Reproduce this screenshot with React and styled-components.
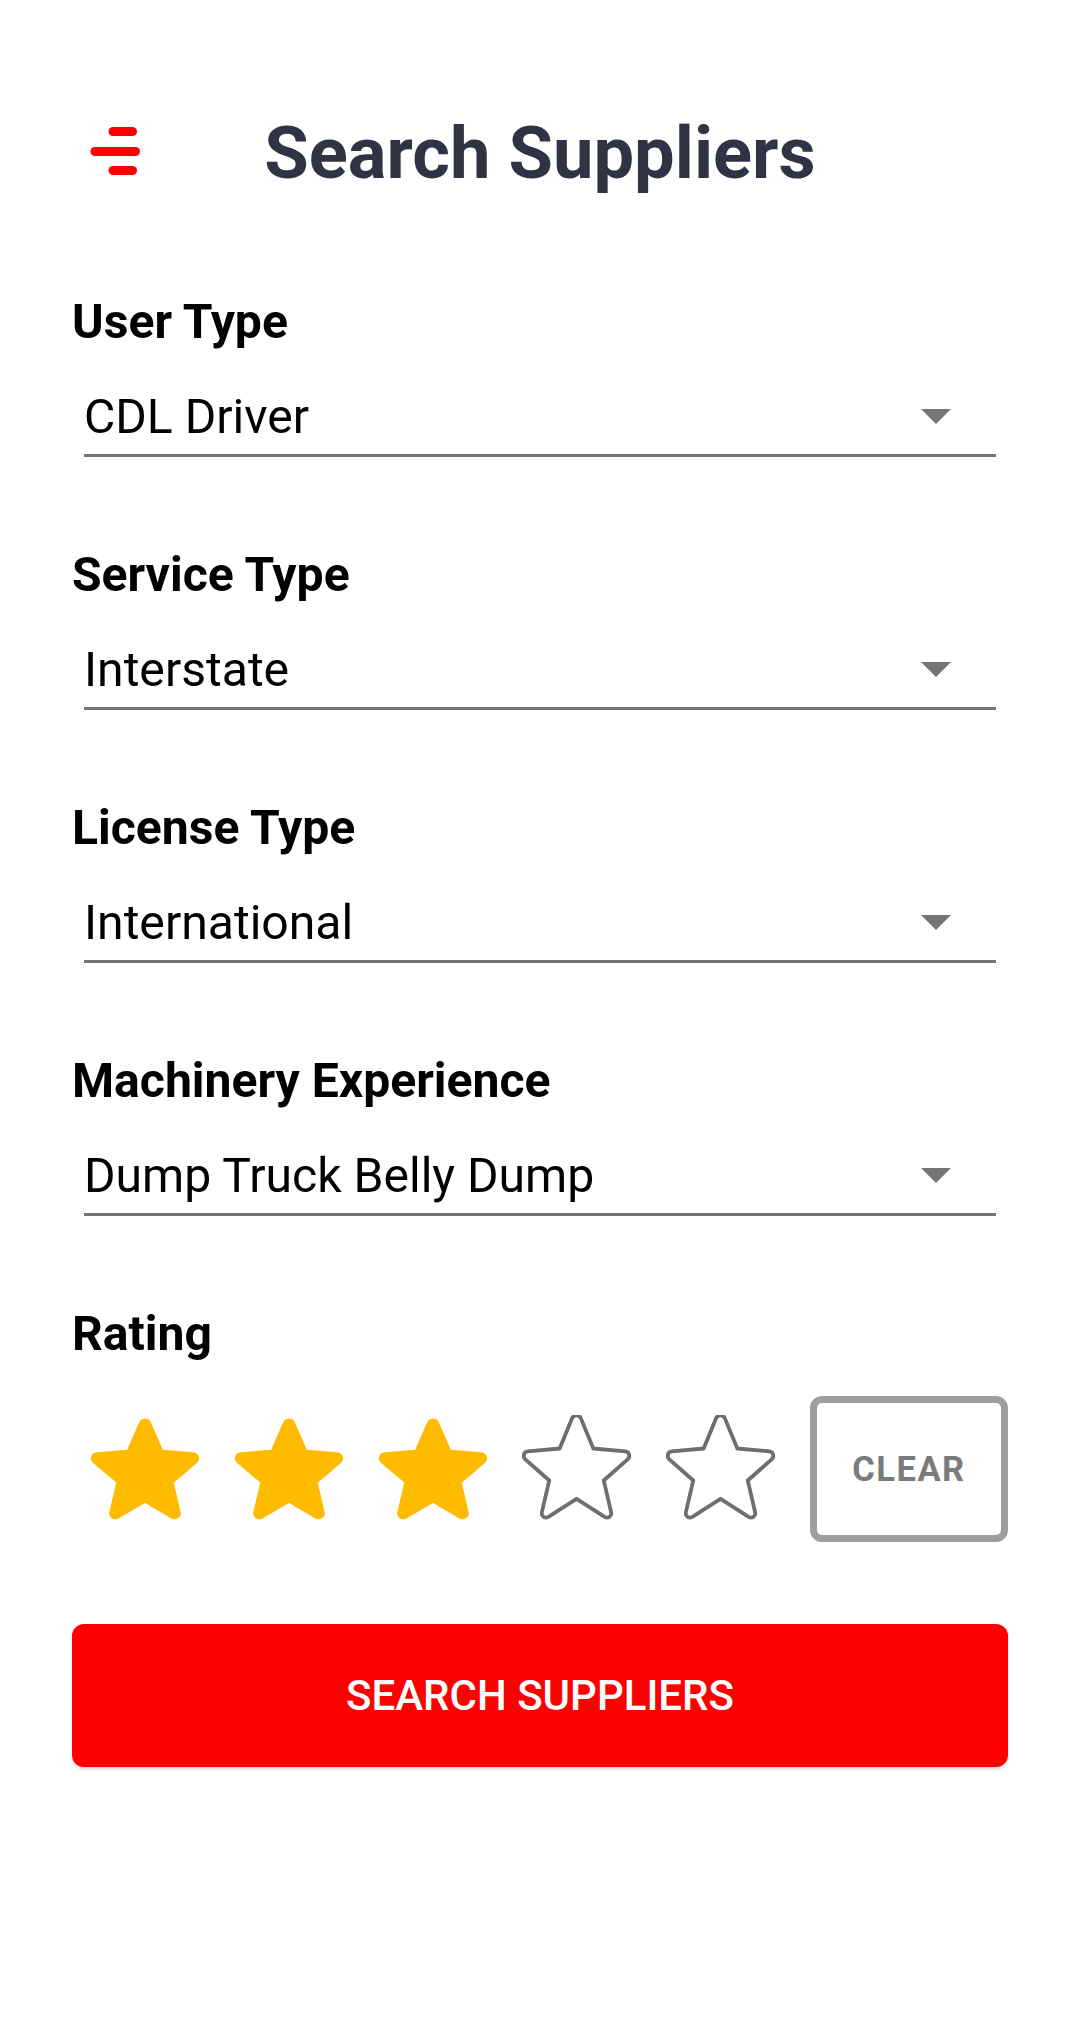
import React from "react";
import styled, { createGlobalStyle } from "styled-components";

const Global = createGlobalStyle`
  html, body { margin: 0; padding: 0; background: #ffffff; }
  body { font-family: Roboto, "Noto Sans", "Liberation Sans", sans-serif; }
  * { box-sizing: border-box; }
`;

const Page = styled.div`
  width: 1080px;
  min-height: 2043px;
  padding: 111px 72px 0;
  background: #ffffff;
`;

const Header = styled.header`
  display: grid;
  grid-template-columns: 1fr auto 1fr;
  align-items: start;
`;

const MenuButton = styled.button`
  justify-self: start;
  margin: 16px 0 0 18px;
  padding: 0;
  border: none;
  background: transparent;
  width: 50px;
  height: 48px;
  display: flex;
`;

const Title = styled.h1`
  margin: 0;
  font-family: Roboto, sans-serif;
  font-weight: 700;
  font-size: 72.3px;
  line-height: 86px;
  color: #2f3343;
  white-space: nowrap;
`;

const Form = styled.div`
  display: flex;
  flex-direction: column;
  gap: 90px;
  margin-top: 97px;
`;

const Field = styled.div`
  display: flex;
  flex-direction: column;
`;

const Label = styled.div`
  font-family: Roboto, sans-serif;
  font-weight: 700;
  font-size: 48.1px;
  line-height: 55px;
  color: #000000;
`;

const Select = styled.div`
  display: flex;
  align-items: center;
  justify-content: space-between;
  margin: 40px 12px 0;
  padding-bottom: 10px;
  border-bottom: 3px solid #757575;
`;

const Value = styled.span`
  font-family: Roboto, sans-serif;
  font-weight: 400;
  font-size: 48.1px;
  line-height: 55px;
  color: #000000;
`;

const Caret = styled.svg`
  width: 30px;
  height: 15px;
  margin-right: 45px;
  display: block;
`;

const StarRow = styled.div`
  display: flex;
  align-items: center;
  margin-top: 35px;
  padding-left: 18px;
`;

const StarSlot = styled.div`
  width: 144px;
  flex: none;
  display: flex;
`;

const StarSvg = styled.svg`
  display: block;
  flex: none;
`;

const ClearButton = styled.button`
  margin-left: auto;
  width: 198px;
  height: 146px;
  border: 7px solid #9e9e9e;
  border-radius: 12px;
  background: #ffffff;
  font-family: Roboto, sans-serif;
  font-weight: 700;
  font-size: 34.5px;
  letter-spacing: 1.5px;
  color: #7b7b7b;
  display: flex;
  align-items: center;
  justify-content: center;
  padding: 0;
`;

const SearchButton = styled.button`
  margin-top: 82px;
  width: 100%;
  height: 143px;
  border: none;
  border-radius: 12px;
  background: #ff0000;
  color: #ffffff;
  font-family: Roboto, sans-serif;
  font-weight: 500;
  font-size: 42px;
  letter-spacing: 0;
  text-transform: uppercase;
  box-shadow: 0 2px 3px rgba(0, 0, 0, 0.18);
`;

const STAR_PATH =
  "M12 17.27l4.15 2.51c.76.46 1.69-.22 1.49-1.08l-1.1-4.72 3.67-3.18c.67-.58.31-1.68-.57-1.75l-4.83-.41-1.89-4.46c-.34-.81-1.5-.81-1.84 0L9.19 8.63l-4.83.41c-.88.07-1.24 1.17-.57 1.75l3.67 3.18-1.1 4.72c-.2.86.73 1.54 1.49 1.08l4.15-2.5z";

function Star({ filled }) {
  if (filled) {
    return (
      <StarSvg width="110" height="103" viewBox="3.3 3.5 17.4 16.7" preserveAspectRatio="none">
        <path d={STAR_PATH} fill="#ffbb00" />
      </StarSvg>
    );
  }
  return (
    <StarSvg width="109" height="108" viewBox="3.1 3.1 17.8 17.4" preserveAspectRatio="none">
      <path
        d="M12 16.6l4.6 2.9c.6.35 1.2-.1 1.05-.75l-1.2-5.1 3.9-3.4c.5-.45.25-1.25-.4-1.3l-5.2-.45-2.05-4.9c-.26-.6-1.14-.6-1.4 0L9.25 8.5l-5.2.45c-.65.05-.9.85-.4 1.3l3.9 3.4-1.2 5.1c-.15.65.45 1.1 1.05.75z"
        fill="none"
        stroke="#6e6e6e"
        strokeWidth="3.8"
        strokeLinejoin="round"
        vectorEffect="non-scaling-stroke"
      />
    </StarSvg>
  );
}

const fields = [
  { label: "User Type", value: "CDL Driver" },
  { label: "Service Type", value: "Interstate" },
  { label: "License Type", value: "International" },
  { label: "Machinery Experience", value: "Dump Truck Belly Dump" },
];

export default function App() {
  return (
    <>
      <Global />
      <Page>
        <Header>
          <MenuButton aria-label="menu">
            <svg width="50" height="48" viewBox="0 0 50 48">
              <g stroke="#ff0000" strokeWidth="9" strokeLinecap="round">
                <line x1="23" y1="4.5" x2="42.5" y2="4.5" />
                <line x1="5" y1="24.5" x2="45.5" y2="24.5" />
                <line x1="23" y1="43.5" x2="42.5" y2="43.5" />
              </g>
            </svg>
          </MenuButton>
          <Title>Search Suppliers</Title>
          <div />
        </Header>

        <Form>
          {fields.map((f) => (
            <Field key={f.label}>
              <Label>{f.label}</Label>
              <Select>
                <Value>{f.value}</Value>
                <Caret viewBox="0 0 30 15">
                  <polygon points="0,0 30,0 15,15" fill="#757575" />
                </Caret>
              </Select>
            </Field>
          ))}
          <Field>
            <Label>Rating</Label>
            <StarRow>
              {[1, 2, 3, 4, 5].map((n) => (
                <StarSlot key={n}>
                  <Star filled={n <= 3} />
                </StarSlot>
              ))}
              <ClearButton>CLEAR</ClearButton>
            </StarRow>
          </Field>
        </Form>

        <SearchButton>Search Suppliers</SearchButton>
      </Page>
    </>
  );
}
